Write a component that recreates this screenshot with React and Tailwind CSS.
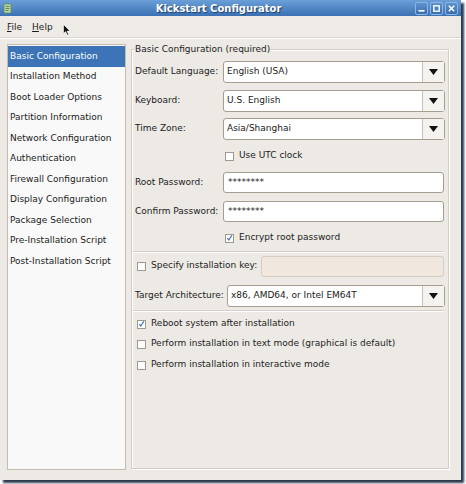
import React from "react";

const items = [
  "Basic Configuration",
  "Installation Method",
  "Boot Loader Options",
  "Partition Information",
  "Network Configuration",
  "Authentication",
  "Firewall Configuration",
  "Display Configuration",
  "Package Selection",
  "Pre-Installation Script",
  "Post-Installation Script",
];

const Arrow = () => (
  <svg width="9" height="6" viewBox="0 0 9 6">
    <polygon points="0,0 9,0 4.5,6" fill="#111" />
  </svg>
);

const Combo = ({ value, className = "" }) => (
  <div className={`flex h-[22px] flex-1 items-stretch rounded-[3px] border border-[#a59d92] bg-white ${className}`}>
    <div className="flex flex-1 items-center pl-[3px]">{value}</div>
    <div className="flex w-[22px] items-center justify-center border-l border-[#c9c1b6] bg-[#f5f3f0]">
      <Arrow />
    </div>
  </div>
);

const Entry = ({ value, disabled }) => (
  <div
    className={`flex h-[21px] flex-1 items-center rounded-[3px] border pl-[4px] ${
      disabled ? "border-[#d6ccc0] bg-[#f0e8df]" : "border-[#a59d92] bg-white"
    }`}
  >
    {value}
  </div>
);

const Check = ({ checked, label, className = "" }) => (
  <div className={`flex h-[16px] items-center gap-[5px] ${className}`}>
    <div className="flex h-[9px] w-[9px] items-center justify-center border border-[#9f988f] bg-white">
      {checked && (
        <svg width="8" height="8" viewBox="0 0 8 8">
          <path d="M1.5 4.2 L3.2 6.3 L6.6 1" stroke="#3b6fc4" strokeWidth="1.3" fill="none" />
        </svg>
      )}
    </div>
    <span>{label}</span>
  </div>
);

const Separator = ({ className = "" }) => (
  <div className={`h-[2px] border-t border-[#d5cec5] bg-white ${className}`} />
);

const TitleBar = () => (
  <div className="relative flex h-[16px] items-center bg-gradient-to-b from-[#6a9fd8] to-[#3b71b3]">
    <svg className="ml-[3px]" width="9" height="11" viewBox="0 0 9 11">
      <rect x="1" y="1" width="7" height="9" rx="1" fill="#b8d3a5" stroke="#5f8f55" strokeWidth="0.8" />
      <path d="M2.5 3.5h4M2.5 5.5h4M2.5 7.5h3" stroke="#4c7a45" strokeWidth="0.8" />
    </svg>
    <div className="flex-1 pl-[10px] text-center text-[10px] font-bold text-white [text-shadow:1px_1px_1px_#1d3f6b]">
      Kickstart Configurator
    </div>
    <div className="mr-[3px] flex gap-[2px]">
      {["min", "max", "close"].map((k) => (
        <div
          key={k}
          className="flex h-[13px] w-[13px] items-center justify-center rounded-[2px] border border-[#8fb6e2] bg-gradient-to-b from-[#5c93d0] to-[#3a6fae]"
        >
          <svg width="9" height="9" viewBox="0 0 9 9">
            {k === "min" && <rect x="1.5" y="6" width="6" height="1.6" fill="#fff" />}
            {k === "max" && <rect x="1.8" y="1.8" width="5.4" height="5.4" stroke="#fff" strokeWidth="1.4" fill="none" />}
            {k === "close" && <path d="M1.8 1.8 L7.2 7.2 M7.2 1.8 L1.8 7.2" stroke="#fff" strokeWidth="1.6" />}
          </svg>
        </div>
      ))}
    </div>
  </div>
);

const MenuBar = () => (
  <div className="relative flex h-[22px] items-center gap-[10px] border-b border-[#dcd6ce] bg-[#eeebe7] pl-[7px] pt-[3px] shadow-[0_1px_0_#fff]">
    <span>
      <span className="underline">F</span>ile
    </span>
    <span>
      <span className="underline">H</span>elp
    </span>
    <svg className="absolute left-[63px] top-[8px]" width="8" height="12" viewBox="0 0 8 12">
      <path d="M0.5 0.5 L0.5 9.5 L2.7 7.6 L4.2 11 L5.6 10.4 L4.1 7.1 L7 7 Z" fill="#111" stroke="#fff" strokeWidth="0.6" />
    </svg>
  </div>
);

export default function App() {
  return (
    <div
      className="h-[484px] w-[466px] bg-white text-[9px] text-[#1b1b1b]"
      style={{ fontFamily: '"DejaVu Sans", "Liberation Sans", sans-serif' }}
    >
      <div className="flex h-[480px] w-[461px] flex-col bg-[#edeae6] shadow-[3px_3px_2px_rgba(22,36,60,0.9)]">
        <TitleBar />
        <MenuBar />
        <div className="flex flex-1 gap-[5px] pb-[10px] pl-[7px] pr-[12px] pt-[6px]">
          {/* sidebar list */}
          <div className="w-[119px] border border-[#c5bbaf] bg-[#f9f9f9] pt-[1px]">
            {items.map((it, i) => (
              <div
                key={it}
                className={`flex h-[20.5px] items-center pl-[2px] ${
                  i === 0 ? "bg-[#3c74b7] text-white" : ""
                }`}
              >
                {it}
              </div>
            ))}
          </div>

          {/* main frame */}
          <div className="relative mb-[1px] mt-[5px] flex flex-1 flex-col border border-[#d3ccc3] pl-[3px] pr-[3px] pt-[11px] shadow-[inset_1px_1px_0_#fff,1px_1px_0_#fff]">
            <span className="absolute -top-[6px] left-[3px] bg-[#edeae6] pr-[1px] leading-[11px]">
              Basic Configuration (required)
            </span>

            <div className="flex items-center">
              <span className="w-[88px]">Default Language:</span>
              <Combo value="English (USA)" />
            </div>
            <div className="mt-[7px] flex items-center">
              <span className="w-[88px]">Keyboard:</span>
              <Combo value="U.S. English" />
            </div>
            <div className="mt-[6px] flex items-center">
              <span className="w-[88px]">Time Zone:</span>
              <Combo value="Asia/Shanghai" />
            </div>
            <Check className="ml-[90px] mt-[8px]" label="Use UTC clock" />

            <div className="mt-[8px] flex items-center pr-[1px]">
              <span className="w-[88px]">Root Password:</span>
              <Entry value="********" />
            </div>
            <div className="mt-[8px] flex items-center pr-[1px]">
              <span className="w-[88px]">Confirm Password:</span>
              <Entry value="********" />
            </div>
            <Check className="ml-[90px] mt-[8px]" checked label="Encrypt root password" />

            <Separator className="-ml-[2px] mr-[1px] mt-[5px]" />

            <div className="mt-[3px] flex items-center pr-[1px]">
              <Check className="ml-[2px] w-[124px]" label="Specify installation key:" />
              <div className="flex h-[20px] flex-1">
                <Entry disabled value="" />
              </div>
            </div>

            <div className="mt-[9px] flex items-center">
              <span className="w-[92px]">Target Architecture:</span>
              <Combo value="x86, AMD64, or Intel EM64T" />
            </div>

            <Separator className="-ml-[2px] mr-[1px] mt-[3px]" />

            <Check className="ml-[2px] mt-[4px]" checked label="Reboot system after installation" />
            <Check className="ml-[2px] mt-[4px]" label="Perform installation in text mode (graphical is default)" />
            <Check className="ml-[2px] mt-[5px]" label="Perform installation in interactive mode" />
          </div>
        </div>
      </div>
    </div>
  );
}
